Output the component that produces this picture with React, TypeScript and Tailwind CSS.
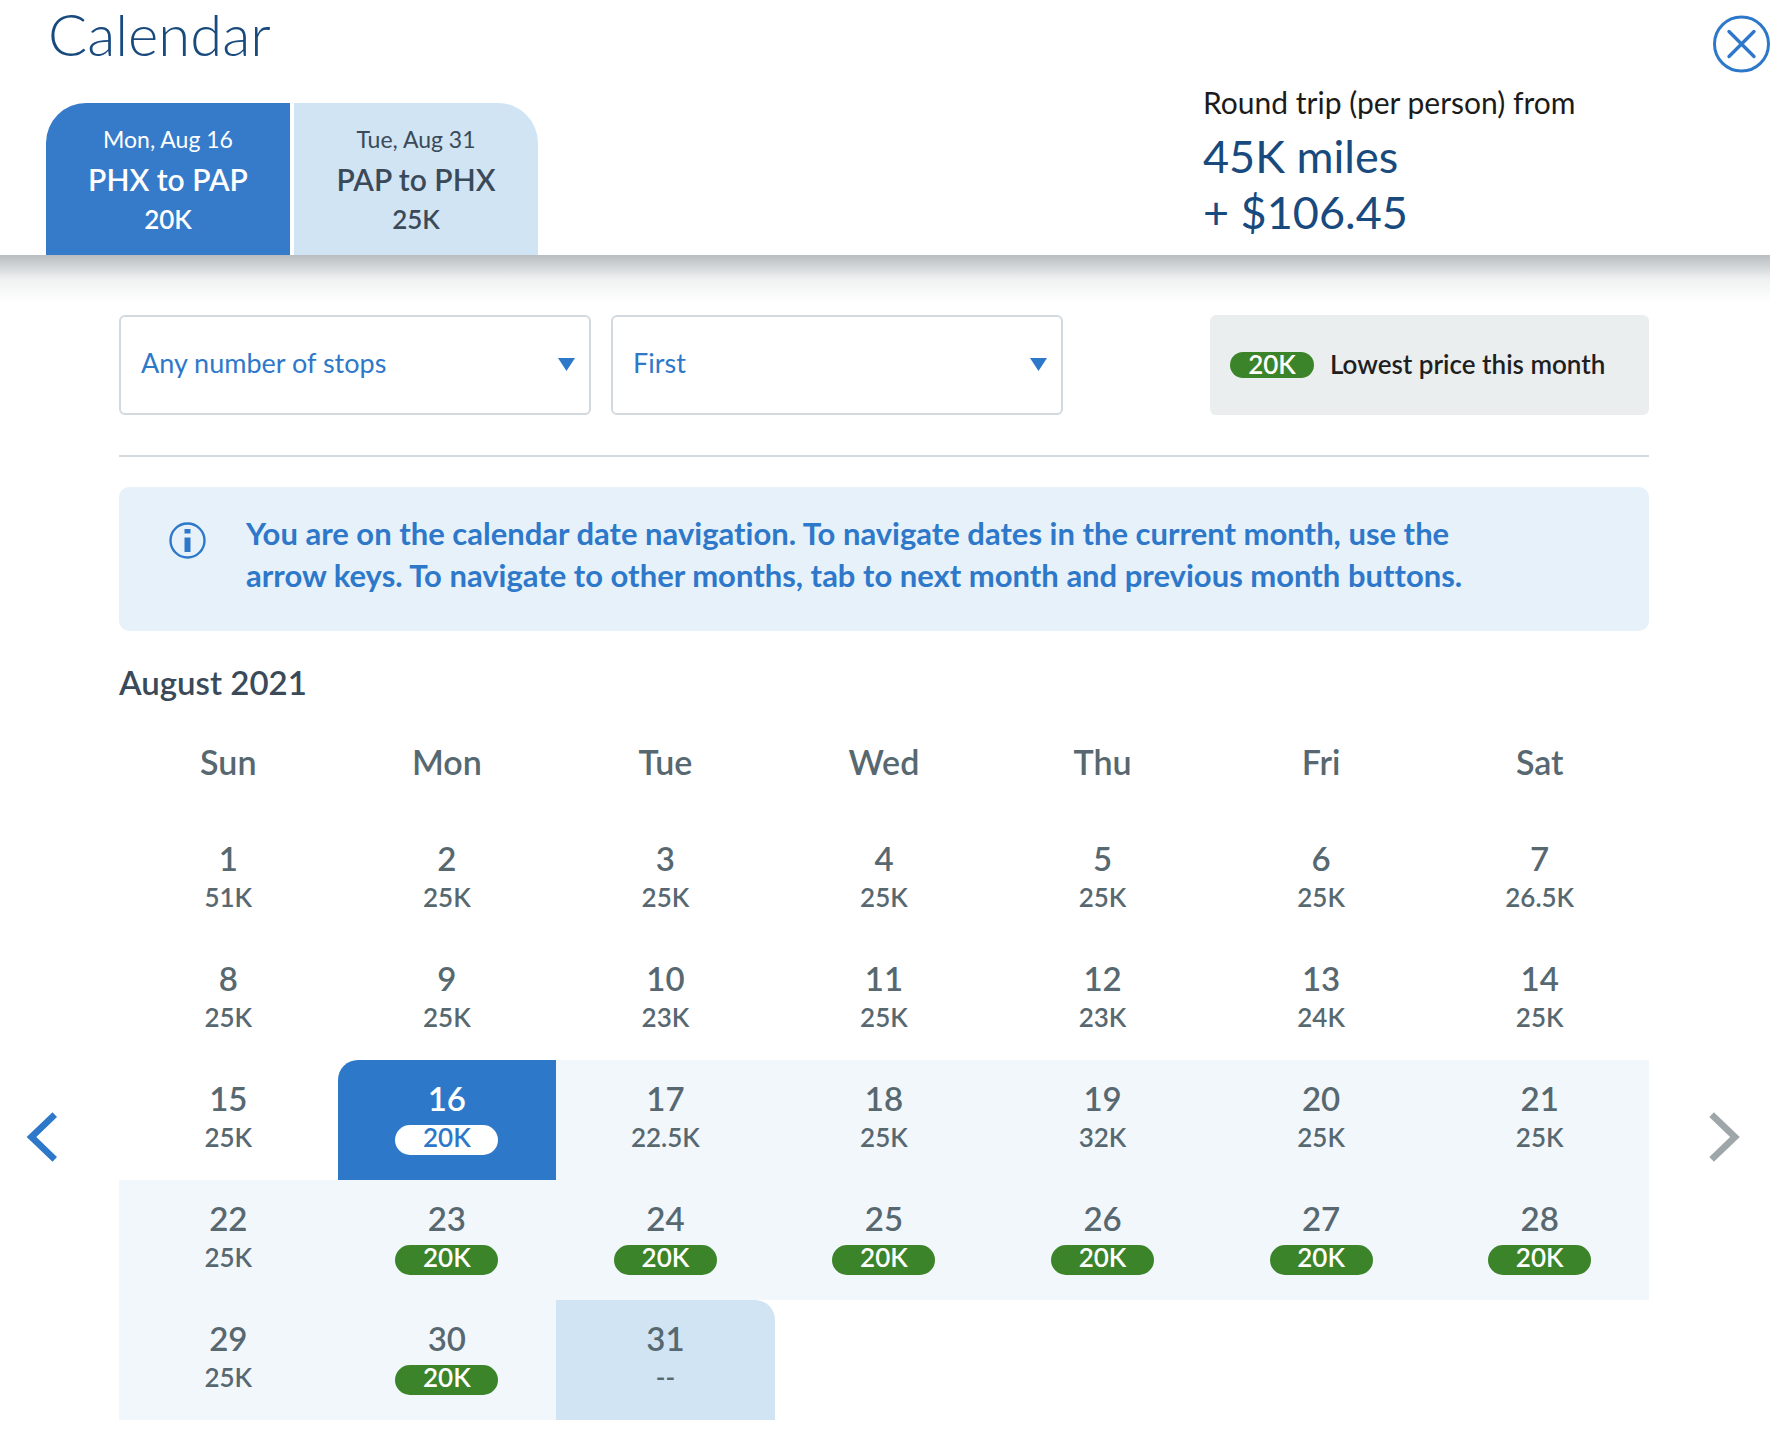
import React from "react";

// One bookable day in the month grid
interface Day {
  date: number;
  price: string;
}

const weekdays = ["Sun", "Mon", "Tue", "Wed", "Thu", "Fri", "Sat"];

const prices = [
  "51K", "25K", "25K", "25K", "25K", "25K", "26.5K",
  "25K", "25K", "23K", "25K", "23K", "24K", "25K",
  "25K", "20K", "22.5K", "25K", "32K", "25K", "25K",
  "25K", "20K", "20K", "20K", "20K", "20K", "20K",
  "25K", "20K", "--",
];

const lowestPrice = "20K";
const departDate = 16;
const returnDate = 31;

// Split the month into rows of seven, August 2021 starts on a Sunday
const weeks: Day[][] = [];
prices.forEach((price, i) => {
  if (i % 7 === 0) weeks.push([]);
  weeks[weeks.length - 1].push({ date: i + 1, price });
});

const cellStyle = (date: number) => {
  if (date === departDate) return "bg-[#2e78ca] text-white rounded-tl-[20px]";
  if (date === returnDate) return "bg-[#d1e4f3] text-[#576870] rounded-tr-[20px]";
  if (date > departDate && date < returnDate) return "bg-[#f2f7fc] text-[#576870]";
  return "text-[#576870]";
};

const priceStyle = ({ date, price }: Day) => {
  if (date === departDate) return "bg-white text-[#2e78ca]";
  if (price === lowestPrice) return "bg-[#3c8429] text-white";
  return "";
};

export default function App() {
  return (
    <div className="min-h-screen bg-white font-['Lato','Open_Sans',sans-serif] [font-variant-ligatures:none]">
      <header className="flex items-end">
        <div className="flex-1 pl-[46px]">
          <h1 className="h-[103px] pl-0.5 text-[58px] leading-[68px] font-light text-[#184a7e]">
            Calendar
          </h1>
          <div className="flex gap-1">
            <TripTab date="Mon, Aug 16" route="PHX to PAP" price="20K" active />
            <TripTab date="Tue, Aug 31" route="PAP to PHX" price="25K" />
          </div>
        </div>

        <div className="w-[510px] pb-[15px]">
          <p className="text-[30px] leading-[36px] text-[#1b1b1b]">
            Round trip (per person) from
          </p>
          <p className="mt-2 text-[45px] leading-[56px] text-[#184a7e]">
            45K miles
            <br />+ $106.45
          </p>
        </div>

        <button aria-label="Close" className="self-start mt-[15px] cursor-pointer">
          <svg width="57" height="58" viewBox="0 0 57 58" fill="none" stroke="#2e78ca" strokeWidth="3">
            <circle cx="28.5" cy="29" r="27" />
            <path d="M16 16.5 41 41.5M41 16.5 16 41.5" strokeWidth="3.4" strokeLinecap="round" />
          </svg>
        </button>
      </header>

      <div className="h-[48px] bg-linear-to-b from-[#b8bdc1] via-[#eff1f1] via-50% to-white" />

      <main className="flex items-start">
        <MonthArrow label="Previous month" />

        <div className="flex-1 pt-3">
          {/* Filters */}
          <div className="flex items-center gap-5 pb-10 border-b-2 border-[#d2d9df]">
            <Filter
              label="Stops"
              options={["Any number of stops", "Nonstop", "1 stop or fewer"]}
              width="w-[472px]"
            />
            <Filter
              label="Cabin"
              options={["First", "Business", "Main Cabin"]}
              width="w-[452px]"
            />
            <div className="ml-auto flex h-[100px] w-[439px] items-center gap-4 rounded-md bg-[#eaeeef] pl-5">
              <span className="flex h-[26px] w-[84px] items-center justify-center rounded-full bg-[#3c8429] pb-0.5 text-[26px] leading-[26px] font-semibold text-white">
                {lowestPrice}
              </span>
              <span className="pb-0.5 text-[26px] leading-[32px] font-semibold text-[#1f1f1f]">
                Lowest price this month
              </span>
            </div>
          </div>

          {/* Keyboard hint */}
          <div className="mt-[30px] flex h-[144px] items-start rounded-[10px] bg-[#e6f1fa] pl-[50px]">
            <svg className="mt-[35px] shrink-0" width="37" height="37" viewBox="0 0 37 37" fill="none">
              <circle cx="18.5" cy="18.5" r="17" stroke="#2e78ca" strokeWidth="2.4" />
              <path d="M15.5 7h6v4.5h-6zM15.5 15.5h6v14.5h-6z" fill="#2e78ca" />
            </svg>
            <p className="ml-10 max-w-[1240px] pt-[25px] text-[31px] leading-[42px] font-bold text-[#2e78ca]">
              You are on the calendar date navigation. To navigate dates in the current month, use the
              arrow keys. To navigate to other months, tab to next month and previous month buttons.
            </p>
          </div>

          <h2 className="mt-[29px] text-[33px] leading-[44px] font-semibold text-[#3a4a59]">
            August 2021
          </h2>

          <table className="mt-9 w-full table-fixed border-collapse">
            <thead>
              <tr>
                {weekdays.map((day) => (
                  <th key={day} scope="col" className="h-[80px] pb-9 text-[34px] leading-[44px] font-semibold text-[#576870]">
                    {day}
                  </th>
                ))}
              </tr>
            </thead>
            <tbody>
              {weeks.map((week) => (
                <tr key={week[0].date}>
                  {week.map((day) => (
                    <td key={day.date} className="p-0">
                      <button
                        className={`flex h-[120px] w-full cursor-pointer flex-col items-center pt-4 font-semibold ${cellStyle(day.date)}`}
                      >
                        <span className="text-[33px] leading-[44px]">{day.date}</span>
                        <span
                          className={`mt-[5px] flex h-[30px] min-w-[103px] items-center justify-center rounded-full pb-1.5 text-[26px] leading-[24px] ${priceStyle(day)}`}
                        >
                          {day.price}
                        </span>
                      </button>
                    </td>
                  ))}
                </tr>
              ))}
            </tbody>
          </table>
        </div>

        <MonthArrow label="Next month" next />
      </main>
    </div>
  );
}

// Tab for one leg of the trip
const TripTab = ({
  date,
  route,
  price,
  active,
}: {
  date: string;
  route: string;
  price: string;
  active?: boolean;
}) => (
  <button
    className={`flex h-[152px] w-[244px] cursor-pointer flex-col items-center pt-5 ${
      active
        ? "rounded-tl-[40px] bg-[#367aca] text-white"
        : "rounded-tr-[40px] bg-[#d1e4f3] text-[#3a4a59]"
    }`}
  >
    <span className="text-[23px] leading-[32px]">{date}</span>
    <span className="mt-1 text-[30px] leading-[40px] font-semibold">{route}</span>
    <span className="text-[26px] leading-[40px] font-semibold">{price}</span>
  </button>
);

// Select with the caret drawn over its right edge
const Filter = ({
  label,
  options,
  width,
}: {
  label: string;
  options: string[];
  width: string;
}) => (
  <div className={`relative ${width}`}>
    <select
      aria-label={label}
      className="h-[100px] w-full appearance-none rounded-md border-2 border-[#d2d9df] bg-white pb-1 pl-5 text-[27px] text-[#2e78ca]"
    >
      {options.map((option) => (
        <option key={option}>{option}</option>
      ))}
    </select>
    <svg
      className="pointer-events-none absolute right-4 top-[43px]"
      width="17"
      height="13"
      viewBox="0 0 17 13"
      fill="#2e78ca"
    >
      <path d="M0 0h17L8.5 13z" />
    </svg>
  </div>
);

const MonthArrow = ({ label, next }: { label: string; next?: boolean }) => (
  <div className={`flex pt-[809px] ${next ? "w-[121px] justify-end pr-[30px]" : "w-[119px] pl-[26px]"}`}>
    <button aria-label={label} disabled={next} className="cursor-pointer">
      <svg width="31" height="50" viewBox="0 0 31 50" fill="none" strokeWidth="6.6">
        {next ? (
          <path d="M2.6 2.6 26 25 2.6 47.4" stroke="#9fa6a9" />
        ) : (
          <path d="M28.8 2.6 5.4 25 28.8 47.4" stroke="#2e78ca" />
        )}
      </svg>
    </button>
  </div>
);
